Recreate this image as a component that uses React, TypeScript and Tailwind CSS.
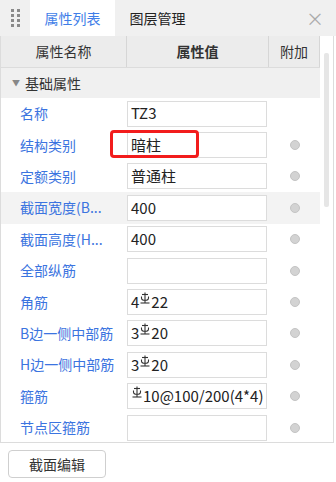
import React from "react";

const rows = [
  { name: "名称", value: "TZ3", dot: false },
  { name: "结构类别", value: "暗柱", dot: true, mark: true },
  { name: "定额类别", value: "普通柱", dot: true },
  { name: "截面宽度(B...", value: "400", dot: true, hover: true },
  { name: "截面高度(H...", value: "400", dot: true },
  { name: "全部纵筋", value: "", dot: true },
  { name: "角筋", value: "4\u{E000}22", dot: true },
  { name: "B边一侧中部筋", value: "3\u{E000}20", dot: true },
  { name: "H边一侧中部筋", value: "3\u{E000}20", dot: true },
  { name: "箍筋", value: "\u{E000}10@100/200(4*4)", dot: true },
  { name: "节点区箍筋", value: "", dot: true },
];

// 三级钢筋符号
const Steel = () => (
  <svg width="10" height="12" viewBox="0 0 10 12" className="self-start mt-[2px] mx-[1px] shrink-0" fill="none" stroke="#333" strokeWidth="1.1">
    <path d="M5 0.5V11" />
    <path d="M2 2.5H8" />
    <path d="M1.5 4.5V6Q1.5 8.3 5 8.3Q8.5 8.3 8.5 6V4.5" />
    <path d="M0.5 11H9.5" />
  </svg>
);

const renderValue = (v: string) => {
  const parts = v.split("\u{E000}");
  return parts.map((p, i) => (
    <React.Fragment key={i}>
      {i > 0 && <Steel />}
      {p}
    </React.Fragment>
  ));
};

export default function App() {
  return (
    <div
      className="w-[336px] h-[482px] bg-white text-[14px] text-[#333] overflow-hidden"
      style={{ fontFamily: '"Noto Sans CJK SC", "Noto Sans", sans-serif' }}
    >
      {/* tabs */}
      <div className="h-[36px] bg-[#f0f0f0] flex items-stretch relative">
        <div className="w-[30px] flex items-center justify-center">
          <div className="grid grid-cols-2 gap-x-[3px] gap-y-[2px]">
            {Array.from({ length: 8 }).map((_, i) => (
              <span key={i} className="w-[3px] h-[3px] bg-[#8a8a8a]" />
            ))}
          </div>
        </div>
        <div className="w-[85px] bg-white flex items-center justify-center text-[#3f7ee8]">属性列表</div>
        <div className="w-[85px] flex items-center justify-center text-[#222]">图层管理</div>
        <div className="absolute right-[12px] top-[9px] text-[#aaa] text-[18px] leading-none">×</div>
      </div>

      <div className="relative h-[407px] border-l border-r border-b border-[#dcdcdc] mr-[2px]">
        {/* header */}
        <div className="flex h-[32px] w-[319px] bg-[#ececec] border-b border-[#dcdcdc]">
          <div className="w-[126px] border-r border-[#d6d6d6] flex items-center justify-center">属性名称</div>
          <div className="w-[142px] border-r border-[#d6d6d6] flex items-center justify-center font-bold">属性值</div>
          <div className="w-[51px] border-r border-[#d6d6d6] flex items-center justify-center">附加</div>
        </div>
        {/* group */}
        <div className="flex items-center h-[30px] w-[319px] bg-[#f0f0f0]">
          <span className="ml-[11px] mr-[5px] text-[#888] text-[8px]">▼</span>
          <span>基础属性</span>
        </div>
        {rows.map((r) => (
          <div key={r.name} className={`flex items-center h-[31.4px] w-[319px] ${r.hover ? "bg-[#f3f3f3]" : ""}`}>
            <div className="w-[126px] pl-[19px] text-[#3b74e0] whitespace-nowrap">{r.name}</div>
            <div className="w-[140px] relative">
              <div className="h-[26px] border border-[#dcdcdc] bg-white pl-[3px] flex items-center whitespace-nowrap overflow-hidden text-[15px] text-[#222]">
                {renderValue(r.value)}
              </div>
              {r.mark && (
                <div className="absolute left-[-17px] top-[-2px] w-[89px] h-[28px] border-[3px] border-[#f21c1c] rounded-[4px]" />
              )}
            </div>
            <div className="flex-1 flex items-center justify-center pl-[2px]">
              {r.dot && (
                <span className="w-[10px] h-[10px] rounded-full bg-[#d3d3d3] border border-[#c4c4c4]" />
              )}
            </div>
          </div>
        ))}
        {/* scrollbar */}
        <div className="absolute right-[4px] top-[17px] w-[5px] h-[154px] bg-[#e6e6e6] rounded-[2px]" />
      </div>

      <div className="pt-[7px] pl-[8px]">
        <button className="w-[98px] h-[28px] border border-[#cfcfcf] rounded-[4px] bg-white text-[#333]">截面编辑</button>
      </div>
    </div>
  );
}
